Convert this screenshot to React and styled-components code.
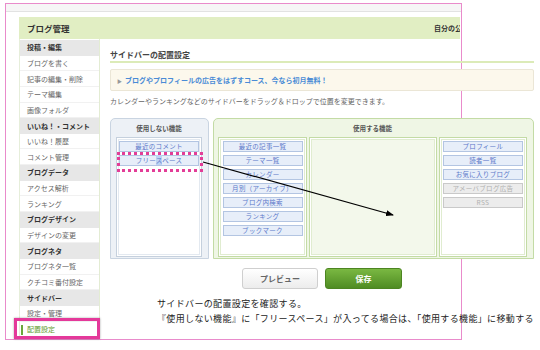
import React from 'react';
import styled, { createGlobalStyle } from 'styled-components';

const GlobalStyle = createGlobalStyle`
  html, body { margin: 0; padding: 0; background: #fff; }
  body { font-family: "Noto Sans CJK JP", "Noto Sans", sans-serif; }
  * { box-sizing: border-box; }
`;

const Page = styled.div`
  position: relative;
  width: 540px;
  height: 350px;
  padding: 3px 0 0 5px;
  overflow: hidden;
`;

const Frame = styled.div`
  width: 457px;
  height: 337px;
  border: 1px solid #e98bcb;
  display: flex;
  flex-direction: column;
`;

const TopStrip = styled.div`
  height: 8px;
  flex-shrink: 0;
  background: #f6f6f6;
  border-bottom: 1px solid #e2e2e2;
`;

const AppWrap = styled.div`
  flex: 1;
  width: 441px;
  margin: 5px 0 0 13px;
  display: flex;
  flex-direction: column;
`;

const Header = styled.div`
  height: 22px;
  flex-shrink: 0;
  background: #e1eec3;
  display: flex;
  align-items: center;
  padding-left: 8px;
  overflow: hidden;
  white-space: nowrap;
`;

const HeaderTitle = styled.div`
  width: 407px;
  flex-shrink: 0;
  font-size: 8.5px;
  font-weight: bold;
  color: #333;
`;

const HeaderLink = styled.div`
  font-size: 7px;
  font-weight: bold;
  color: #333;
`;

const Body = styled.div`
  flex: 1;
  display: flex;
`;

const Sidebar = styled.div`
  width: 81px;
  flex-shrink: 0;
  padding-top: 1px;
  border-left: 1px solid #e6eeda;
  border-right: 1px solid #e3ecd3;
  display: flex;
  flex-direction: column;
`;

const SideRow = styled.div`
  position: relative;
  height: 15.65px;
  flex-shrink: 0;
  display: flex;
  align-items: center;
  padding-left: 7px;
  font-size: 7px;
  white-space: nowrap;
  font-weight: ${p => (p.$head ? 'bold' : 'normal')};
  color: ${p => (p.$head ? '#333' : p.$active ? '#5f9c2e' : '#666')};
  background: ${p => (p.$head ? '#e7e7e7' : '#fff')};
  border-bottom: 1px solid ${p => (p.$head ? '#e7e7e7' : '#f1f1f1')};

  ${p => p.$active && `
    &::before {
      content: '';
      position: absolute;
      left: 1px;
      top: 3px;
      width: 2px;
      height: 10px;
      background: #6aa73a;
    }
  `}
`;

const Highlight = styled.div`
  position: absolute;
  left: -6px;
  right: -1px;
  top: -4px;
  bottom: -3px;
  border: 3px solid #e4399a;
  box-shadow: 0 0 2px rgba(0, 0, 0, 0.35);
  pointer-events: none;
`;

const Main = styled.div`
  flex: 1;
  padding: 0 5px 0 10px;
  display: flex;
  flex-direction: column;
`;

const Title = styled.div`
  margin-top: 10px;
  line-height: 12px;
  font-size: 8px;
  font-weight: bold;
  color: #444;
  border-bottom: 2px solid #dcebb8;
`;

const Notice = styled.div`
  margin-top: 6px;
  height: 22px;
  background: #fcf8ec;
  border: 1px solid #ebe6d6;
  border-radius: 2px;
  display: flex;
  align-items: center;
  gap: 3px;
  padding-left: 6px;
`;

const Bullet = styled.span`
  font-size: 5px;
  color: #999;
`;

const NoticeText = styled.span`
  font-size: 7px;
  font-weight: bold;
  color: #4a8bd6;
`;

const Desc = styled.div`
  margin-top: 4px;
  line-height: 12px;
  font-size: 7px;
  color: #666;
  white-space: nowrap;
`;

const Columns = styled.div`
  margin-top: 11px;
  height: 141px;
  display: flex;
  gap: 4px;
`;

const Box = styled.div`
  width: ${p => (p.$used ? 'auto' : '99px')};
  flex: ${p => (p.$used ? 1 : 'none')};
  background: ${p => (p.$used ? '#eff6e5' : '#edf1f6')};
  border: 1px solid ${p => (p.$used ? '#c3dba5' : '#c9d4e1')};
  border-radius: 5px 5px 0 0;
  padding: ${p => (p.$used ? '0 6px 1px 4px' : '0 6px 1px 5px')};
  display: flex;
  flex-direction: column;
`;

const BoxTitle = styled.div`
  height: 18px;
  line-height: 18px;
  text-align: center;
  font-size: 6.5px;
  font-weight: bold;
  color: #555;
`;

const ColRow = styled.div`
  flex: 1;
  display: flex;
  gap: 2px;
`;

const Panel = styled.div`
  width: ${p => p.$w || 'auto'};
  flex: ${p => (p.$w ? 'none' : 1)};
  background: ${p => (p.$tint ? '#f3f8eb' : '#fff')};
  border: 1px solid ${p => (p.$green ? '#c3dba5' : '#c5d0dd')};
  box-shadow: inset 0 0 0 1px #fff, inset 0 0 0 2px ${p => (p.$green ? '#e0ecd0' : '#e3e9f0')};
  padding: 3px 2px;
  display: flex;
  flex-direction: column;
  align-items: center;
  gap: 3px;
`;

const Item = styled.div`
  position: relative;
  width: 80px;
  height: 11px;
  flex-shrink: 0;
  border: 1px solid ${p => (p.$off ? '#c9c9c9' : '#b3c5e2')};
  background: ${p => (p.$off ? '#ececec' : '#e7eef9')};
  color: ${p => (p.$off ? '#b0b0b0' : '#5b78c9')};
  font-size: 6.5px;
  line-height: 9px;
  letter-spacing: 0.3px;
  text-align: center;
  white-space: nowrap;
`;

const Selected = styled.span`
  background: #bcd3f3;
`;

const DottedMark = styled.div`
  position: absolute;
  left: -3px;
  right: -5px;
  top: -4px;
  bottom: -7px;
  border: 3px dotted #e33d97;
  pointer-events: none;
`;

const ButtonRow = styled.div`
  margin-top: 9px;
  display: flex;
  justify-content: center;
  gap: 7px;
`;

const Button = styled.div`
  width: ${p => (p.$primary ? '77px' : '76px')};
  height: 21px;
  border-radius: 3px;
  display: flex;
  align-items: center;
  justify-content: center;
  font-size: 8px;
  font-weight: bold;
  color: ${p => (p.$primary ? '#fff' : '#666')};
  background: ${p => (p.$primary
    ? 'linear-gradient(#7ab842, #4f8c23)'
    : 'linear-gradient(#ffffff, #ececec)')};
  border: 1px solid ${p => (p.$primary ? '#4c8521' : '#cfcfcf')};
`;

const Notes = styled.div`
  margin-top: 6.5px;
  padding-left: 47px;
  font-size: 9px;
  line-height: 15px;
  letter-spacing: 0.35px;
  color: #222;
  white-space: nowrap;
`;

const ArrowLayer = styled.svg`
  position: absolute;
  left: 0;
  top: 0;
  pointer-events: none;
`;

const sideRows = [
  { t: '投稿・編集', head: true },
  { t: 'ブログを書く' },
  { t: '記事の編集・削除' },
  { t: 'テーマ編集' },
  { t: '画像フォルダ' },
  { t: 'いいね！・コメント', head: true },
  { t: 'いいね！履歴' },
  { t: 'コメント管理' },
  { t: 'ブログデータ', head: true },
  { t: 'アクセス解析' },
  { t: 'ランキング' },
  { t: 'ブログデザイン', head: true },
  { t: 'デザインの変更' },
  { t: 'ブログネタ', head: true },
  { t: 'ブログネタ一覧' },
  { t: 'クチコミ番付設定' },
  { t: 'サイドバー', head: true },
  { t: '設定・管理' },
  { t: '配置設定', active: true },
];

const usedLeft = ['最近の記事一覧', 'テーマ一覧', 'カレンダー', '月別（アーカイブ）', 'ブログ内検索', 'ランキング', 'ブックマーク'];
const usedRight = [
  { t: 'プロフィール' },
  { t: '読者一覧' },
  { t: 'お気に入りブログ' },
  { t: 'アメーバブログ広告', off: true },
  { t: 'RSS', off: true },
];

export default function App() {
  return (
    <>
      <GlobalStyle />
      <Page>
        <Frame>
          <TopStrip />
          <AppWrap>
            <Header>
              <HeaderTitle>ブログ管理</HeaderTitle>
              <HeaderLink>自分の公開ページへ</HeaderLink>
            </Header>
            <Body>
              <Sidebar>
                {sideRows.map(r => (
                  <SideRow key={r.t} $head={r.head} $active={r.active}>
                    {r.t}
                    {r.active && <Highlight />}
                  </SideRow>
                ))}
              </Sidebar>
              <Main>
                <Title>サイドバーの配置設定</Title>
                <Notice>
                  <Bullet>▶</Bullet>
                  <NoticeText>ブログやプロフィールの広告をはずすコース、今なら初月無料！</NoticeText>
                </Notice>
                <Desc>カレンダーやランキングなどのサイドバーをドラッグ＆ドロップで位置を変更できます。</Desc>
                <Columns>
                  <Box>
                    <BoxTitle>使用しない機能</BoxTitle>
                    <Panel>
                      <Item>最近のコメント</Item>
                      <Item>
                        フリー<Selected>ス</Selected>ペース
                        <DottedMark />
                      </Item>
                    </Panel>
                  </Box>
                  <Box $used>
                    <BoxTitle>使用する機能</BoxTitle>
                    <ColRow>
                      <Panel $green $w="89px">
                        {usedLeft.map(t => <Item key={t}>{t}</Item>)}
                      </Panel>
                      <Panel $green $tint />
                      <Panel $green $w="88px">
                        {usedRight.map(r => <Item key={r.t} $off={r.off}>{r.t}</Item>)}
                      </Panel>
                    </ColRow>
                  </Box>
                </Columns>
                <ButtonRow>
                  <Button>プレビュー</Button>
                  <Button $primary>保存</Button>
                </ButtonRow>
                <Notes>
                  サイドバーの配置設定を確認する。
                  <br />
                  『使用しない機能』に「フリースペース」が入ってる場合は、「使用する機能」に移動する
                </Notes>
              </Main>
            </Body>
          </AppWrap>
        </Frame>
        <ArrowLayer width="540" height="350" viewBox="0 0 540 350">
          <defs>
            <marker id="head" markerWidth="8" markerHeight="6" refX="7" refY="3" orient="auto" markerUnits="userSpaceOnUse">
              <path d="M0,0 L8,3 L0,6 Z" fill="#000" />
            </marker>
          </defs>
          <line x1="203" y1="162" x2="393" y2="215" stroke="#000" strokeWidth="1.2" markerEnd="url(#head)" />
        </ArrowLayer>
      </Page>
    </>
  );
}
